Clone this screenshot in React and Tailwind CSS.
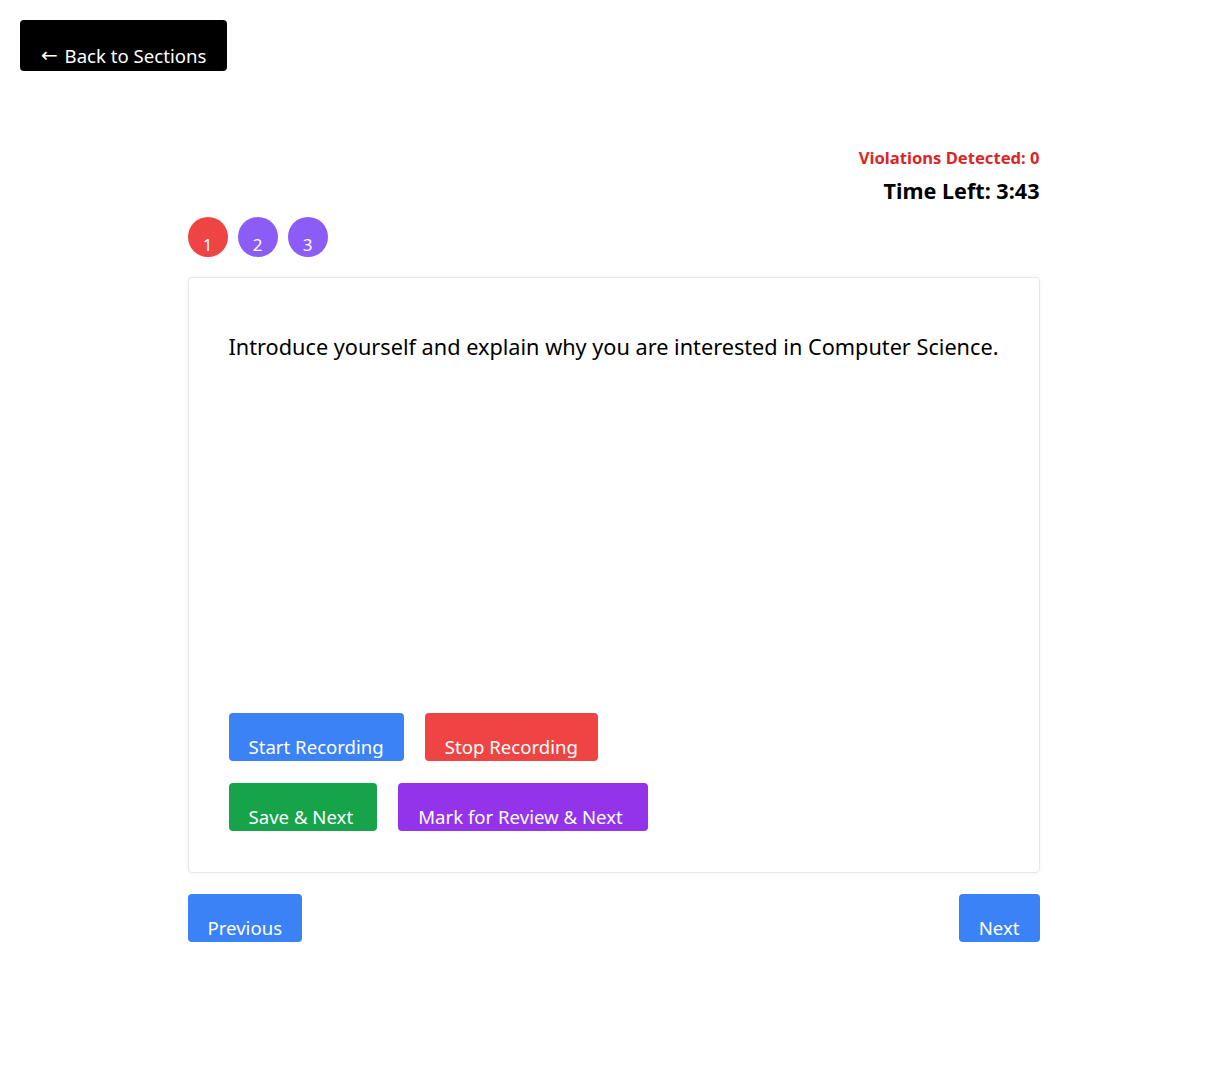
export default function App() {
  const font = { fontFamily: '"Noto Sans", "Open Sans", sans-serif' };
  const btn = "text-white text-[18.6px] leading-6 rounded-[4px] pt-[22px] pb-[2px] px-5";
  return (
    <div className="min-h-[1080px] bg-white text-black" style={font}>
      <div className="px-5 pt-5">
        <button className="bg-black text-white text-[18.6px] leading-6 rounded-[4px] pt-[24px] pb-[3px] pl-[21px] pr-[21px]">
          <span className="font-['DejaVu_Sans',sans-serif] text-[20px] leading-none relative -top-[1px] mr-[2px]">←</span> Back to Sections
        </button>
      </div>
      <div className="w-[852px] mx-auto mt-[77px]">
        <div className="flex flex-col items-end">
          <div className="text-[#dc2626] font-bold text-[16.6px] leading-5">Violations Detected: 0</div>
          <div className="font-bold text-[21.6px] leading-7 mt-[9px]">Time Left: 3:43</div>
        </div>
        <div className="flex gap-[10px] mt-[12px]">
          <div className="w-10 h-10 rounded-full bg-[#ef4444] text-white text-[17px] leading-5 pt-[18px] text-center">1</div>
          <div className="w-10 h-10 rounded-full bg-[#8b5cf6] text-white text-[17px] leading-5 pt-[18px] text-center">2</div>
          <div className="w-10 h-10 rounded-full bg-[#8b5cf6] text-white text-[17px] leading-5 pt-[18px] text-center">3</div>
        </div>
        <div className="mt-5 h-[596px] border border-[#e5e7eb] rounded-[4px] shadow-[0_0_4px_rgba(0,0,0,0.05)] p-10 flex flex-col">
          <p className="text-[21.7px] leading-7 mt-[15px]">
            Introduce yourself and explain why you are interested in Computer Science.
          </p>
          <div className="mt-auto mb-[1px] flex flex-col gap-[22px]">
            <div className="flex gap-[21px]">
              <button className={`bg-[#3b82f6] ${btn}`}>Start Recording</button>
              <button className={`bg-[#ef4444] ${btn}`}>Stop Recording</button>
            </div>
            <div className="flex gap-[21px]">
              <button className={`bg-[#16a34a] ${btn} pr-[24px]`}>Save &amp; Next</button>
              <button className={`bg-[#9333ea] ${btn} pr-[25px]`}>Mark for Review &amp; Next</button>
            </div>
          </div>
        </div>
        <div className="flex justify-between mt-[21px]">
          <button className={`bg-[#3b82f6] ${btn}`}>Previous</button>
          <button className={`bg-[#3b82f6] ${btn}`}>Next</button>
        </div>
      </div>
    </div>
  );
}
